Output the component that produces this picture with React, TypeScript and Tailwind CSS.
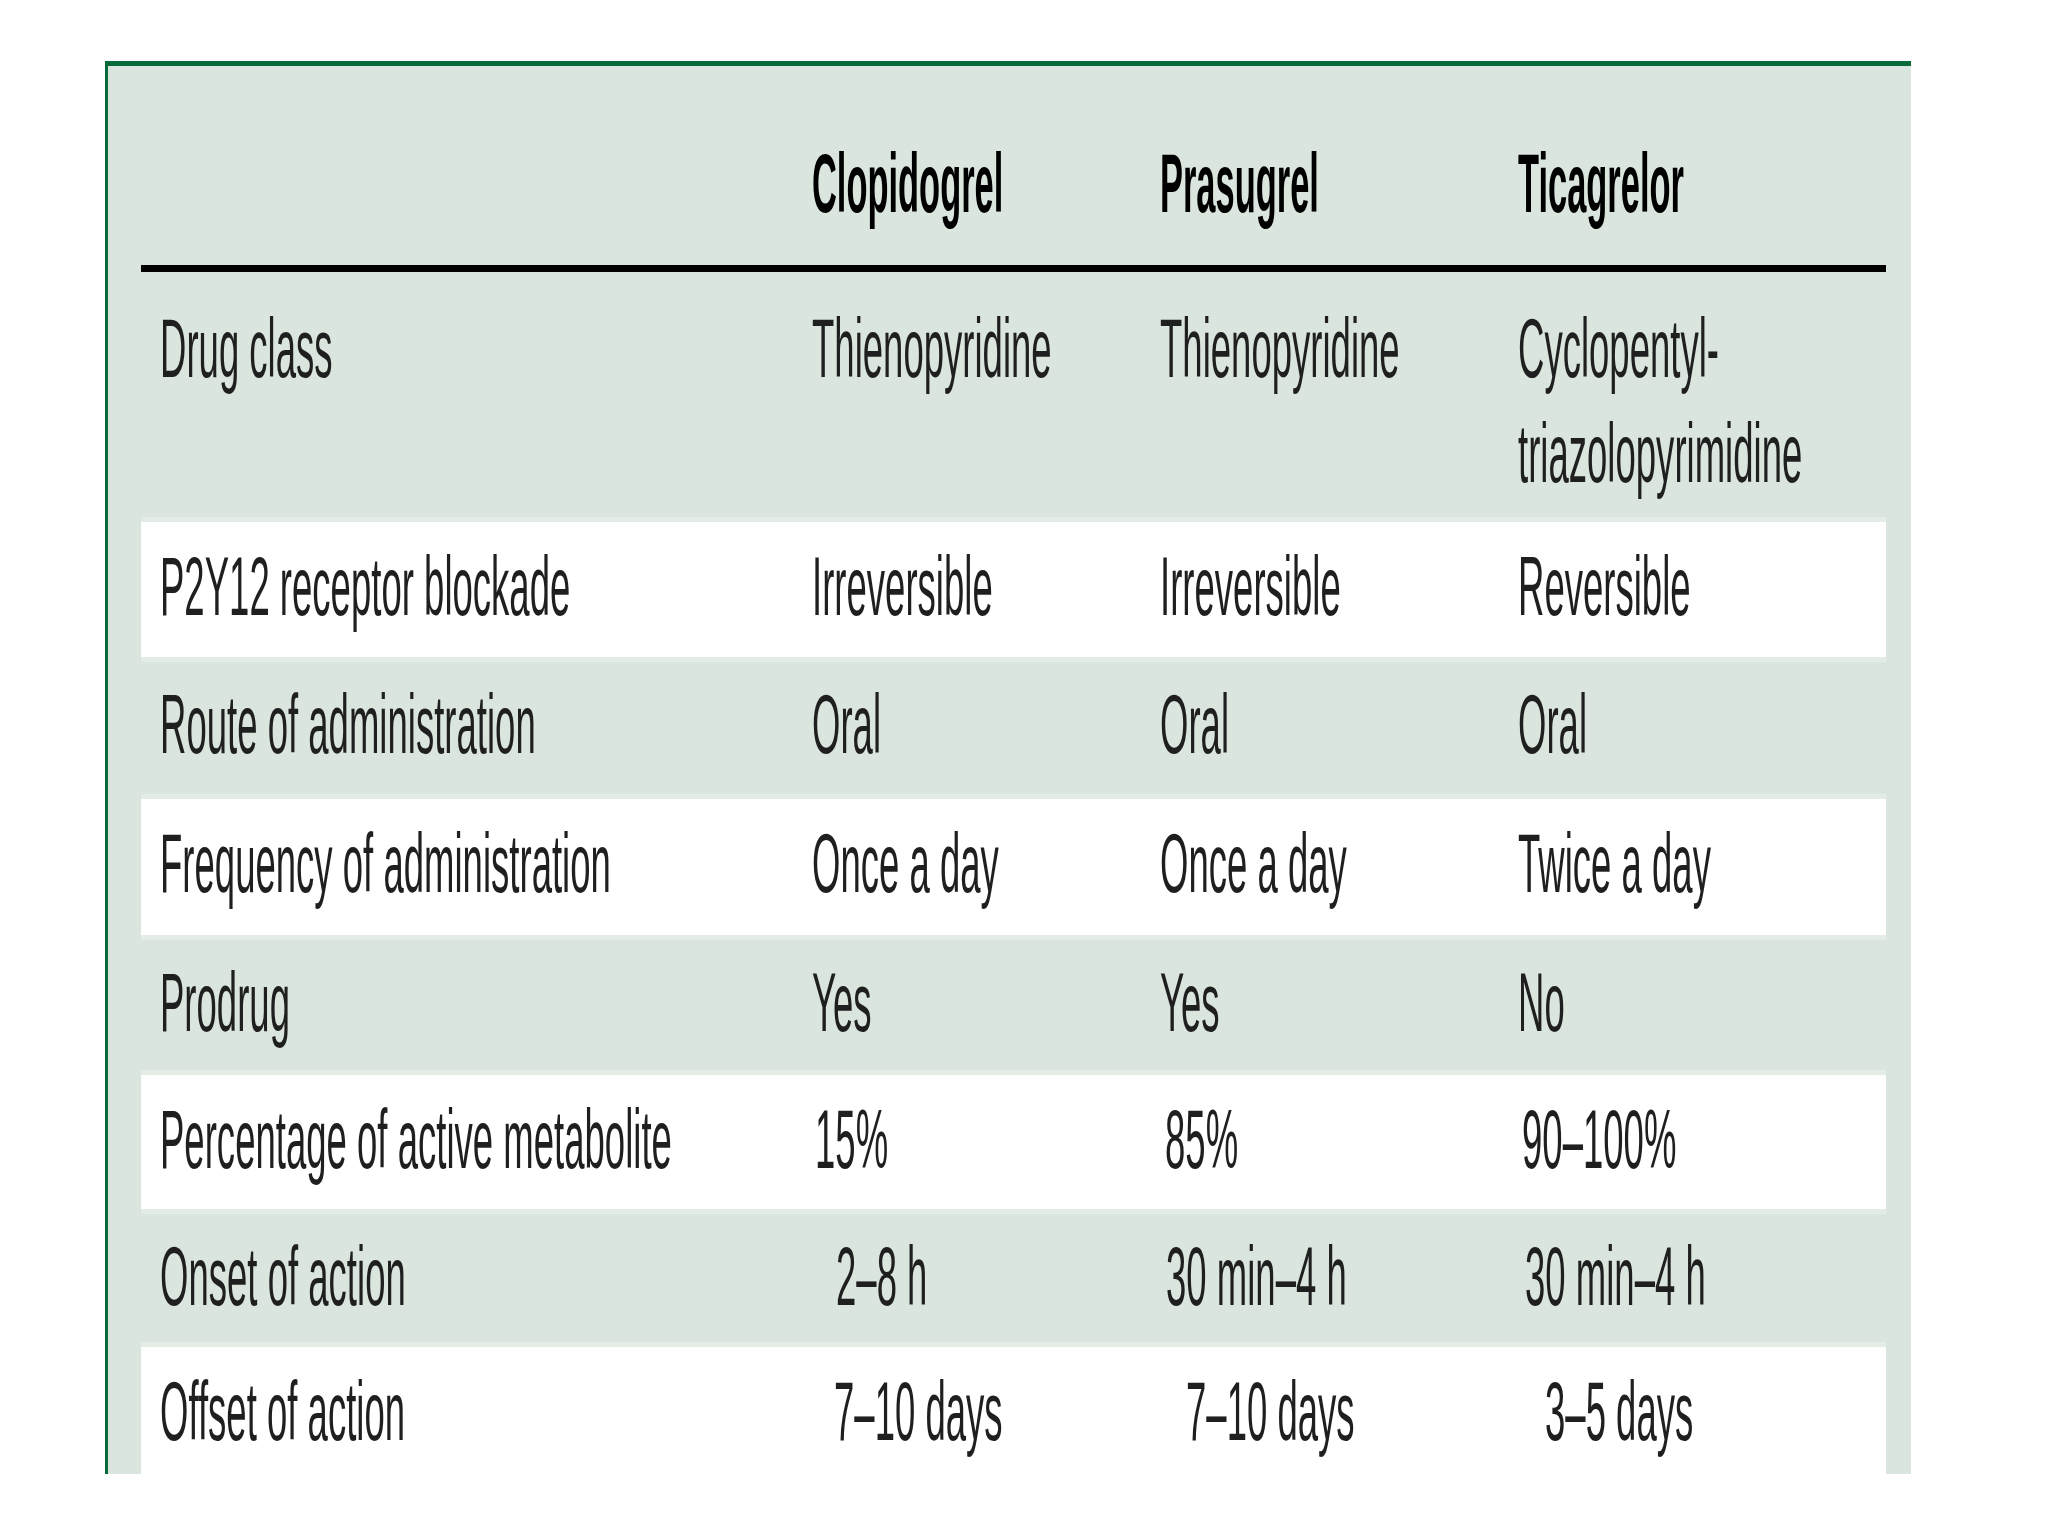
import React from "react";

type Cell = { t: string[]; cls?: string };
type Row = { label: string; cells: Cell[]; cls: string };

function Txt({ children }: { children: React.ReactNode }) {
  return (
    <span className="inline-block whitespace-nowrap origin-left scale-x-[0.435] text-[#1f1f1f]">
      {children}
    </span>
  );
}

function Head({ children }: { children: React.ReactNode }) {
  return (
    <span className="inline-block whitespace-nowrap origin-left scale-x-[0.41] font-bold text-black">
      {children}
    </span>
  );
}

const rows: Row[] = [
  {
    label: "Drug class",
    cls: "h-[245px] pt-[24px]",
    cells: [
      { t: ["Thienopyridine"] },
      { t: ["Thienopyridine"] },
      { t: ["Cyclopentyl-", "triazolopyrimidine"] },
    ],
  },
  {
    label: "P2Y12 receptor blockade",
    cls: "h-[145px] pt-[12px] bg-white border-y-[5px] border-[#e4ece6]",
    cells: [{ t: ["Irreversible"] }, { t: ["Irreversible"] }, { t: ["Reversible"] }],
  },
  {
    label: "Route of administration",
    cls: "h-[132px] pt-[10px]",
    cells: [{ t: ["Oral"] }, { t: ["Oral"] }, { t: ["Oral"] }],
  },
  {
    label: "Frequency of administration",
    cls: "h-[146px] pt-[12px] bg-white border-y-[5px] border-[#e4ece6]",
    cells: [{ t: ["Once a day"] }, { t: ["Once a day"] }, { t: ["Twice a day"] }],
  },
  {
    label: "Prodrug",
    cls: "h-[130px] pt-[10px]",
    cells: [{ t: ["Yes"] }, { t: ["Yes"] }, { t: ["No"] }],
  },
  {
    label: "Percentage of active metabolite",
    cls: "h-[144px] pt-[12px] bg-white border-y-[5px] border-[#e4ece6]",
    cells: [
      { t: ["15%"], cls: "ml-[3px]" },
      { t: ["85%"], cls: "ml-[5px]" },
      { t: ["90–100%"], cls: "ml-[4px]" },
    ],
  },
  {
    label: "Onset of action",
    cls: "h-[128px] pt-[10px]",
    cells: [
      { t: ["2–8 h"], cls: "ml-[24px]" },
      { t: ["30 min–4 h"], cls: "ml-[6px]" },
      { t: ["30 min–4 h"], cls: "ml-[7px]" },
    ],
  },
  {
    label: "Offset of action",
    cls: "h-[132px] pt-[12px] bg-white border-t-[5px] border-[#e4ece6]",
    cells: [
      { t: ["7–10 days"], cls: "ml-[22px]" },
      { t: ["7–10 days"], cls: "ml-[26px]" },
      { t: ["3–5 days"], cls: "ml-[27px]" },
    ],
  },
];

export default function App() {
  return (
    <div className="w-[2048px] h-[1536px] overflow-hidden bg-white pt-[61px] pl-[105px] font-['Liberation_Sans',Arial,sans-serif] text-[84px] leading-[105px]">
      <div className="w-[1806px] h-[1413px] bg-[#dae5de] border-t-[5px] border-l-[3px] border-[#08693a] pl-[33px] pr-[25px]">
        <div className="h-[199px] pt-[65px] pl-[19px] grid grid-cols-[652px_348px_358px_1fr]">
          <div />
          <div>
            <Head>Clopidogrel</Head>
          </div>
          <div>
            <Head>Prasugrel</Head>
          </div>
          <div>
            <Head>Ticagrelor</Head>
          </div>
        </div>
        <div className="h-[7px] bg-black" />
        {rows.map((r, i) => (
          <div key={i} className={`grid grid-cols-[652px_348px_358px_1fr] pl-[19px] ${r.cls}`}>
            <div>
              <Txt>{r.label}</Txt>
            </div>
            {r.cells.map((c, j) => (
              <div key={j} className={c.cls ?? ""}>
                {c.t.map((line, k) => (
                  <div key={k}>
                    <Txt>{line}</Txt>
                  </div>
                ))}
              </div>
            ))}
          </div>
        ))}
      </div>
    </div>
  );
}
